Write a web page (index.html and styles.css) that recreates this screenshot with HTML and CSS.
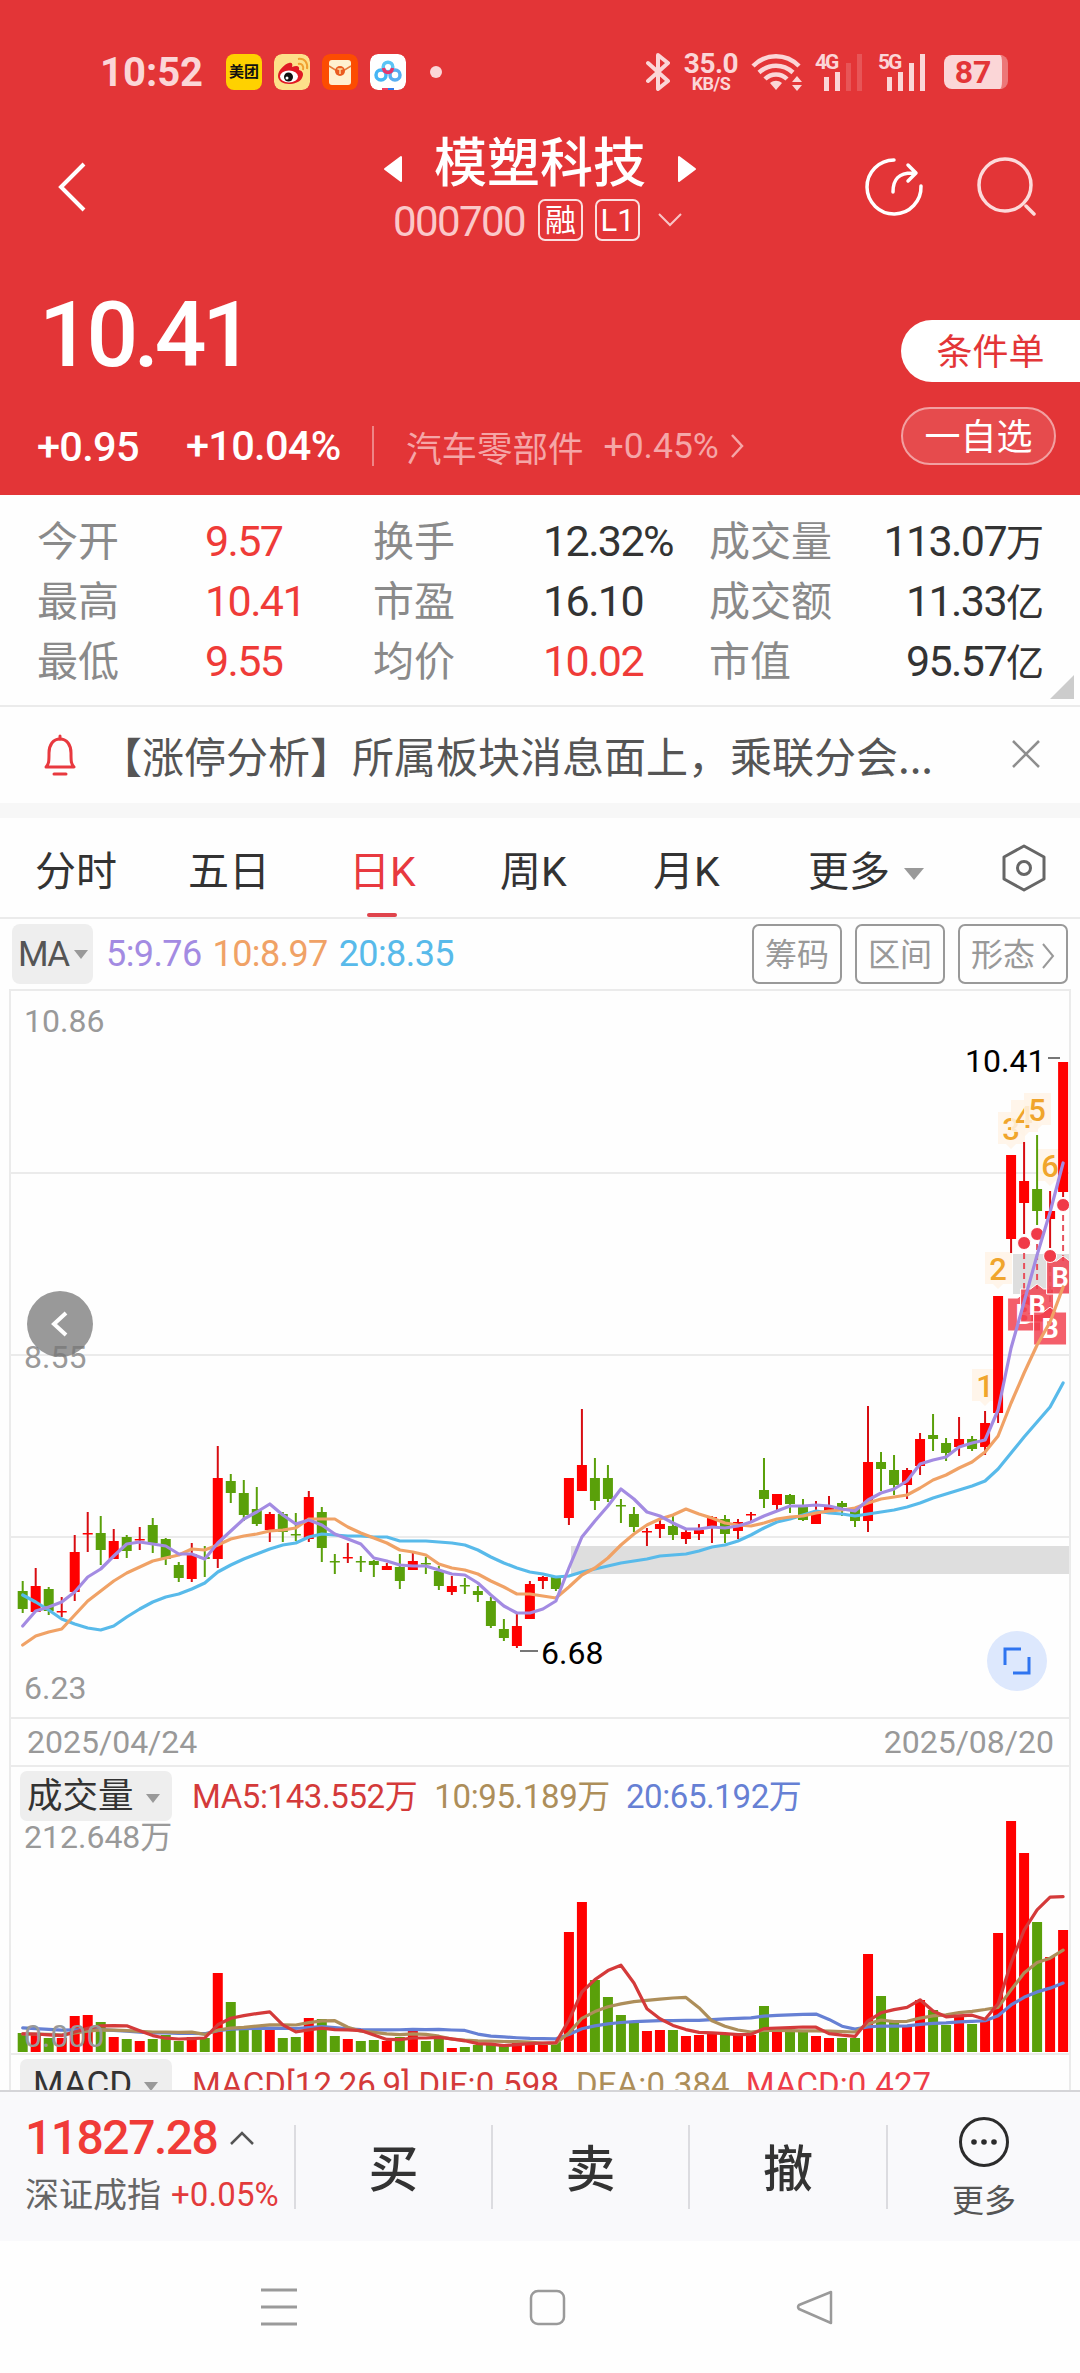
FILE: index.html
```html
<!DOCTYPE html>
<html lang="zh-CN">
<head>
    <meta charset="UTF-8">
    <meta name="viewport" content="width=device-width, initial-scale=1.0">
    <title>模塑科技 000700</title>
    <link rel="stylesheet" href="styles.css">
</head>
<body>
    <header class="header">
        <div class="status-bar">
            <span class="clock">10:52</span>
            <div class="app-icons">
                <span class="app-icon meituan">美团</span>
                <svg class="app-icon" viewBox="0 0 36 36">
                    <rect width="36" height="36" rx="8" fill="#fde08a"/>
                    <path d="M4 22c0-6 7-12 11-13 3-1 4 1 3 4 5-2 8-1 7 3 4 1 5 4 3 8-2 4-8 6-13 6C9 30 4 27 4 22z" fill="#e01a24"/>
                    <ellipse cx="15" cy="22.500" rx="9" ry="6" fill="#fff"/>
                    <circle cx="14.500" cy="23" r="4.500" fill="#111"/>
                    <circle cx="13" cy="24" r="1.500" fill="#fff"/>
                    <path d="M24 10c4-1 6 2 5 6M24 5c7-1 10 4 9 10" stroke="#f0a030" stroke-width="2" fill="none"/>
                </svg>
                <svg class="app-icon" viewBox="0 0 36 36">
                    <rect width="36" height="36" rx="8" fill="#fc4c02"/>
                    <rect x="7" y="6" width="22" height="25" rx="3" fill="#fff0cf"/>
                    <path d="M7 12l8 5h6l8-5" stroke="#e57a3c" stroke-width="1.500" fill="none"/>
                    <circle cx="18" cy="17" r="5" fill="#ea5c20"/>
                    <path d="M15.500 15h5M18 15v5" stroke="#ffd9a0" stroke-width="1.500"/>
                </svg>
                <svg class="app-icon" viewBox="0 0 36 36">
                    <rect width="36" height="36" rx="8" fill="#fff"/>
                    <g fill="none" stroke-width="3.500">
                        <circle cx="11" cy="21" r="5" stroke="#45b5f5"/>
                        <circle cx="25" cy="21" r="5" stroke="#58aef2"/>
                        <circle cx="18" cy="13" r="4.800" stroke="#5cc4f5"/>
                        <path d="M13.500 14c1 6 8 6 9 0" stroke="#e5386d"/>
                    </g>
                    <path d="M12 34h6v2h-6z" fill="#f04060"/>
                    <path d="M18 34h6v2h-6z" fill="#3078e8"/>
                </svg>
            </div>
            <span class="dot"></span>
            <svg class="bluetooth" viewBox="0 0 24 38"><path d="M2 10l20 18-10 8V2l10 8L2 28" fill="none" stroke="currentColor" stroke-width="4" stroke-linejoin="round" stroke-linecap="round"/></svg>
            <div class="net-speed"><b>35.0</b><span>KB/S</span></div>
            <svg class="wifi" viewBox="0 0 52 38">
                <g fill="none" stroke="currentColor" stroke-width="4.500">
                    <path d="M2 13c13-13 33-13 46 0"/>
                    <path d="M8 19.500c10-9 24-9 34 0"/>
                    <path d="M14 26c6-6 16-6 22 0"/>
                </g>
                <path d="M19 30c4-3 8-3 12 0l-6 7z" fill="currentColor"/>
                <path d="M41 29l5-6 5 6zM41 32h10l-5 6z" fill="currentColor"/>
            </svg>
            <div class="signal">
                <b>4G</b>
                <svg viewBox="0 0 38 38">
                    <path d="M9 24h5v14H9zM20 19h5v19h-5z" fill="currentColor"/>
                    <path d="M31 10h5v28h-5zM42 1h5v37h-5z" fill="currentColor" opacity=".2"/>
                </svg>
            </div>
            <div class="signal">
                <b>5G</b>
                <svg viewBox="0 0 38 38"><path d="M9 24h5v14H9zM20 19h5v19h-5zM31 10h5v28h-5zM42 1h5v37h-5z" fill="currentColor"/></svg>
            </div>
            <span class="battery">87</span>
        </div>

        <div class="title-bar">
            <svg class="back" viewBox="0 0 30 50"><path d="M27 2L4 25l23 23" fill="none" stroke="#fff" stroke-width="4"/></svg>
            <div class="stock">
                <div class="stock-name">
                    <svg viewBox="0 0 20 28"><path d="M18 2v24L2 14z" fill="#fff" stroke="#fff" stroke-width="2" stroke-linejoin="round"/></svg>
                    <h1>模塑科技</h1>
                    <svg viewBox="0 0 20 28"><path d="M2 2v24l16-12z" fill="#fff" stroke="#fff" stroke-width="2" stroke-linejoin="round"/></svg>
                </div>
                <div class="stock-code">
                    <span class="code">000700</span>
                    <span class="tag">融</span>
                    <span class="tag">L1</span>
                    <svg viewBox="0 0 26 14"><path d="M2 1l11 11L24 1" fill="none" stroke="#f8c5c6" stroke-width="2"/></svg>
                </div>
            </div>
            <div class="actions">
                <svg viewBox="0 0 60 60">
                    <g fill="none" stroke="#fff" stroke-width="3.500" stroke-linecap="round" stroke-linejoin="round">
                        <path d="M30 3a27 27 0 1 0 27 26"/>
                        <path d="M29 35c0-12 5-20 22-19M44 8l8 8-8 8"/>
                    </g>
                </svg>
                <svg viewBox="0 0 60 60">
                    <g fill="none" stroke="#fcdada" stroke-width="3.500" stroke-linecap="round">
                        <circle cx="29" cy="28" r="26"/>
                        <path d="M50 49l8 8"/>
                    </g>
                </svg>
            </div>
        </div>

        <div class="quote">
            <div class="quote-main">
                <div class="price">10.41</div>
                <div class="change">
                    <span class="amount">+0.95</span>
                    <span class="percent">+10.04%</span>
                    <span class="industry">汽车零部件</span>
                    <span class="industry-change">+0.45%</span>
                    <svg viewBox="0 0 14 24"><path d="M2 1l10 11L2 23" fill="none" stroke="#f5a6a7" stroke-width="2.500"/></svg>
                </div>
            </div>
            <div class="quote-buttons">
                <a class="btn-order">条件单</a>
                <a class="btn-watch">一自选</a>
            </div>
        </div>
    </header>

    <section class="stats">
        <span class="label">今开</span><span class="up">9.57</span>
        <span class="label">换手</span><span>12.32%</span>
        <span class="label">成交量</span><span class="right">113.07<i>万</i></span>
        <span class="label">最高</span><span class="up">10.41</span>
        <span class="label">市盈</span><span>16.10</span>
        <span class="label">成交额</span><span class="right">11.33<i>亿</i></span>
        <span class="label">最低</span><span class="up">9.55</span>
        <span class="label">均价</span><span class="up">10.02</span>
        <span class="label">市值</span><span class="right">95.57<i>亿</i></span>
        <b class="corner"></b>
    </section>

    <section class="notice">
        <svg class="bell" viewBox="0 0 34 42">
            <g fill="none" stroke="#e8393f" stroke-width="3" stroke-linecap="round" stroke-linejoin="round">
                <path d="M3 33c3-3 3-6 3-14C6 11 10 5 17 5s11 6 11 14c0 8 0 11 3 14z"/>
                <path d="M17 2v3M11 40h12"/>
            </g>
        </svg>
        <p>【涨停分析】所属板块消息面上，乘联分会...</p>
        <svg class="close" viewBox="0 0 28 28"><path d="M1 1l26 26M27 1L1 27" stroke="#8e8e8e" stroke-width="2.500"/></svg>
    </section>

    <nav class="tabs">
        <a>分时</a>
        <a>五日</a>
        <a class="active">日K</a>
        <a>周K</a>
        <a>月K</a>
        <a class="more">更多<b class="caret"></b></a>
        <svg viewBox="0 0 44 48">
            <g fill="none" stroke="#666" stroke-width="3" stroke-linejoin="round">
                <path d="M22 2l20 11v22L22 46 2 35V13z"/>
                <circle cx="22" cy="24" r="6.500"/>
            </g>
        </svg>
    </nav>

    <section class="toolbar">
        <a class="ma-select">MA<b class="caret"></b></a>
        <span class="ma5">5:9.76</span>
        <span class="ma10">10:8.97</span>
        <span class="ma20">20:8.35</span>
        <a class="tool first">筹码</a>
        <a class="tool">区间</a>
        <a class="tool">形态<svg viewBox="0 0 14 26"><path d="M2 1l10 12L2 25" fill="none" stroke="#999" stroke-width="2"/></svg></a>
    </section>

    <main class="chart">
        <svg id="kline" viewBox="11 1 1058 726"></svg>
        <div class="dates"><span>2025/04/24</span><span>2025/08/20</span></div>
        <div class="indicator">
            <a class="select">成交量<b class="caret"></b></a>
            <span class="v5">MA5:143.552万</span>
            <span class="v10">10:95.189万</span>
            <span class="v20">20:65.192万</span>
        </div>
        <svg id="volume" viewBox="11 0 1058 230"></svg>
        <div class="indicator macd">
            <a class="select">MACD<b class="caret"></b></a>
            <span class="v5">MACD[12,26,9] DIF:0.598</span>
            <span class="v10">DEA:0.384</span>
            <span class="hist">MACD:0.427</span>
        </div>
    </main>

    <footer class="trade-bar">
        <div class="index">
            <div class="index-value">11827.28<svg viewBox="0 0 26 14"><path d="M2 13L13 2l11 11" fill="none" stroke="#555" stroke-width="2.500"/></svg></div>
            <div class="index-name">深证成指<span>+0.05%</span></div>
        </div>
        <a>买</a>
        <a>卖</a>
        <a>撤</a>
        <div class="trade-more">
            <svg viewBox="0 0 52 52">
                <circle cx="26" cy="26" r="23.500" fill="none" stroke="#2c2c2c" stroke-width="3"/>
                <g fill="#2c2c2c"><circle cx="16" cy="26" r="2.800"/><circle cx="26" cy="26" r="2.800"/><circle cx="36" cy="26" r="2.800"/></g>
            </svg>
            <span>更多</span>
        </div>
    </footer>

    <div class="system-nav">
        <svg viewBox="0 0 40 40"><path d="M2 3h36M2 20h36M2 37h36" stroke="#9a9a9a" stroke-width="3"/></svg>
        <svg viewBox="0 0 40 40"><rect x="4" y="4" width="33" height="33" rx="7" fill="none" stroke="#9a9a9a" stroke-width="2.500"/></svg>
        <svg viewBox="0 0 40 40"><path d="M36 5v31L4 22q-2-2 0-4z" fill="none" stroke="#9a9a9a" stroke-width="2.500" stroke-linejoin="round"/></svg>
    </div>

    <script src="script.js"></script>
</body>
</html>
```

FILE: styles.css
```css
* {
    box-sizing: border-box;
}

body {
    margin: 0;
    width: 1080px;
    height: 2373px;
    overflow: hidden;
    background-color: #fefefe;
    color: #333;
    font-family: Roboto, "Noto Sans CJK SC", sans-serif;
}

svg {
    display: block;
    flex: none;
}

h1, p {
    margin: 0;
}

/* Header */
.header {
    height: 495px;
    background-color: #e33537;
    color: #fff;
}

.status-bar {
    display: flex;
    align-items: center;
    height: 110px;
    padding: 34px 72px 0 100px;
    color: #fbd6d7;
}

.clock {
    width: 126px;
    font-size: 40px;
    font-weight: bold;
    white-space: nowrap;
}

.app-icons {
    display: flex;
    gap: 12px;
}

.app-icon {
    width: 36px;
    height: 36px;
    border-radius: 8px;
}

.meituan {
    background-color: #ffd100;
    color: #111;
    font-size: 15px;
    font-weight: bold;
    line-height: 36px;
    text-align: center;
}

.dot {
    width: 12px;
    height: 12px;
    margin-left: 24px;
    border-radius: 50%;
    background-color: #fbd6d7;
}

.bluetooth {
    width: 24px;
    height: 38px;
    margin-left: auto;
}

.net-speed {
    display: flex;
    flex-direction: column;
    align-items: center;
    width: 60px;
    margin-left: 11px;
    letter-spacing: -0.5px;
}

.net-speed b {
    font-size: 28px;
    font-weight: bold;
    line-height: 22px;
}

.net-speed span {
    font-size: 18px;
    font-weight: bold;
    line-height: 17px;
}

.wifi {
    width: 52px;
    height: 38px;
    margin-left: 10px;
}

.signal {
    display: flex;
    width: 49px;
    height: 38px;
    margin-left: 12px;
}

.signal b {
    width: 0;
    font-size: 21px;
    font-weight: bold;
    line-height: 18px;
    letter-spacing: -2px;
}

.signal svg {
    width: 38px;
    height: 38px;
    overflow: visible;
}

.signal + .signal {
    margin-left: 14px;
}

.battery {
    width: 64px;
    height: 34px;
    margin-left: 17px;
    border-radius: 8px;
    border-right: 6px solid #ec7778;
    background-color: #fbd6d7;
    color: #e33537;
    font-size: 32px;
    font-weight: bold;
    line-height: 35px;
    text-align: center;
}

.title-bar {
    display: grid;
    grid-template-columns: 240px 600px 240px;
    align-items: center;
    height: 131px;
    padding-top: 23px;
}

.back {
    width: 30px;
    height: 50px;
    margin-left: 57px;
}

.stock-name {
    display: flex;
    justify-content: center;
    align-items: center;
    gap: 31px;
    height: 60px;
    margin-bottom: 6px;
}

.stock-name svg {
    width: 20px;
    height: 28px;
    margin-top: 12px;
}

.stock-name h1 {
    padding-top: 2px;
    font-size: 53px;
    font-weight: 500;
    line-height: 60px;
}

.stock-code {
    display: flex;
    justify-content: center;
    align-items: center;
    height: 42px;
    margin-right: 4px;
}

.code {
    margin-right: 13px;
    padding-top: 2px;
    color: #fbc8c9;
    font-size: 42px;
    letter-spacing: -1.6px;
}

.tag {
    width: 45px;
    height: 42px;
    margin-right: 12px;
    border: 2px solid #fbdede;
    border-radius: 7px;
    font-size: 31px;
    line-height: 39px;
    text-align: center;
}

.stock-code svg {
    width: 26px;
    height: 14px;
    margin-left: 5px;
}

.actions {
    display: flex;
    gap: 52px;
    padding-left: 24px;
}

.actions svg {
    width: 60px;
    height: 60px;
}

.quote {
    display: flex;
    justify-content: space-between;
}

.quote-main {
    padding: 44px 0 0 37px;
}

.price {
    height: 100px;
    padding-left: 2px;
    font-size: 91px;
    font-weight: 500;
    line-height: 101px;
    letter-spacing: -4.3px;
}

.change {
    display: flex;
    align-items: center;
    height: 60px;
    margin-top: 31px;
    font-size: 41.5px;
    font-weight: 500;
    letter-spacing: -0.7px;
    white-space: nowrap;
}

.amount {
    width: 149px;
}

.percent {
    width: 188px;
    height: 40px;
    line-height: 40px;
    border-right: 2px solid #ee8586;
}

.industry, .industry-change {
    color: #f5a6a7;
    font-size: 35.5px;
    font-weight: 400;
}

.industry {
    margin: 0 20px 0 32px;
    letter-spacing: 0;
}

.industry-change {
    letter-spacing: 0;
}

.change svg {
    width: 14px;
    height: 24px;
    margin-left: 11px;
}

.quote-buttons {
    width: 179px;
    padding-top: 79px;
    font-size: 36px;
    text-align: center;
}

.btn-order {
    display: block;
    height: 62px;
    border-radius: 31px 0 0 31px;
    background-color: #fff;
    color: #e33537;
    line-height: 66px;
}

.btn-watch {
    display: block;
    width: 155px;
    height: 58px;
    margin-top: 25px;
    border: 2px solid #f2a0a1;
    border-radius: 29px;
    background-color: #e64b4d;
    line-height: 59px;
}

/* Day statistics */
.stats {
    position: relative;
    display: grid;
    grid-template-columns: 168px 168px 170px 166px 132px 203px;
    grid-auto-rows: 60px;
    height: 212px;
    padding: 16px 0 0 37px;
    border-bottom: 2px solid #ebebeb;
    font-size: 43px;
    line-height: 61px;
    letter-spacing: -1.6px;
    white-space: nowrap;
}

.stats .label {
    color: #8a8a8a;
    font-size: 41px;
    line-height: 62px;
    letter-spacing: 0;
}

.stats i {
    font-size: 38px;
    font-style: normal;
    letter-spacing: 0;
}

.stats .right {
    text-align: right;
}

.up {
    color: #ef3b38;
}

.corner {
    position: absolute;
    right: 6px;
    bottom: 6px;
    border-left: 24px solid transparent;
    border-bottom: 24px solid #ccc;
}

/* Notice */
.notice {
    display: flex;
    align-items: center;
    height: 111px;
    padding: 0 40px 0 43px;
    border-bottom: 15px solid #f7f7f7;
}

.bell {
    width: 34px;
    height: 42px;
}

.notice p {
    flex: 1;
    margin-left: 23px;
    color: #555;
    font-family: "Noto Sans CJK SC", sans-serif;
    font-size: 42px;
    line-height: 60px;
    white-space: nowrap;
}

.close {
    width: 28px;
    height: 28px;
    margin-bottom: 2px;
}

/* Period tabs */
.tabs {
    display: grid;
    grid-template-columns: 153px 161px 151px 153px 155px 194px 44px;
    align-items: center;
    height: 101px;
    padding: 0 0 0 35px;
    border-bottom: 2px solid #ebebeb;
    font-size: 41px;
    line-height: 99px;
    white-space: nowrap;
}

.tabs a {
    height: 99px;
    padding-top: 5px;
}

.tabs .active {
    color: #e8393f;
}

.tabs .active::after {
    content: "";
    display: block;
    width: 30px;
    height: 4px;
    margin: -9px 0 0 18px;
    border-radius: 2px;
    background-color: #e0444c;
}

.tabs svg {
    width: 44px;
    height: 48px;
}

.caret {
    display: inline-block;
    border: 7px solid transparent;
    border-top: 9px solid #999;
    border-bottom: 0;
}

.tabs .caret {
    margin: 0 0 6px 14px;
    border-width: 12px 10px 0;
}

/* MA toolbar */
.toolbar {
    display: flex;
    align-items: center;
    height: 70px;
    padding: 0 12px;
    font-size: 36px;
    letter-spacing: -0.6px;
}

.ma-select {
    width: 81px;
    height: 60px;
    padding-left: 6px;
    border-radius: 8px;
    background-color: #eee;
    color: #555;
    font-size: 35px;
    line-height: 62px;
    letter-spacing: -1.5px;
    white-space: nowrap;
}

.ma-select .caret {
    margin: 0 0 7px 5px;
}

.ma5 {
    margin-left: 13px;
    color: #a38be2;
}

.ma10 {
    margin-left: 11px;
    color: #f0a266;
}

.ma20 {
    margin-left: 11px;
    color: #58baea;
}

.tool {
    height: 60px;
    margin-left: 13px;
    padding: 0 11px;
    border: 2px solid #999;
    border-radius: 7px;
    color: #999;
    font-size: 32px;
    line-height: 59px;
    letter-spacing: 0;
}

.tool.first {
    margin-left: auto;
}

.tool svg {
    display: inline-block;
    width: 14px;
    height: 26px;
    margin: 0 0 -3px 6px;
}

/* Charts */
.chart {
    height: 1101px;
    margin: 0 9px;
    border: 2px solid #ebebeb;
    border-bottom: 0;
    overflow: hidden;
}

#kline {
    width: 1058px;
    height: 726px;
}

#volume {
    width: 1058px;
    height: 230px;
    overflow: visible;
}

.axis {
    fill: #999;
    font-size: 32px;
}

.extreme {
    fill: #000;
    font-size: 32px;
}

.count {
    fill: #f0a52c;
    font-size: 31px;
    font-weight: 500;
    text-anchor: middle;
}

.trade-mark {
    fill: #fff;
    font-size: 27px;
    font-weight: bold;
    text-anchor: middle;
}

.dates {
    display: flex;
    justify-content: space-between;
    height: 48px;
    padding: 0 15px 0 16px;
    border-top: 2px solid #ebebeb;
    color: #999;
    font-size: 32px;
    line-height: 47px;
}

.indicator {
    display: flex;
    height: 58px;
    padding-left: 9px;
    border-top: 2px solid #ebebeb;
    font-size: 33px;
    line-height: 59px;
    letter-spacing: -0.4px;
    white-space: nowrap;
}

.select {
    width: 152px;
    height: 50px;
    margin: 4px 20px 0 0;
    padding-left: 7px;
    border-radius: 7px;
    background-color: #eee;
    color: #333;
    font-size: 35.5px;
    line-height: 51px;
    letter-spacing: 0;
}

.select .caret {
    margin: 0 0 5px 12px;
}

.v5 {
    color: #d43a3a;
}

.v10 {
    margin-left: 17px;
    color: #ad8e5a;
}

.v20 {
    margin-left: 16px;
    color: #6680d4;
}

.hist {
    margin-left: 16px;
    color: #ee3d48;
}

.macd {
    height: 37px;
    letter-spacing: 0.1px;
}

.macd .select {
    padding-left: 13px;
    font-size: 35px;
    line-height: 51px;
}

/* Trade bar */
.trade-bar {
    display: grid;
    grid-template-columns: 294px 197px 197px 198px 194px;
    align-items: center;
    height: 151px;
    border-top: 2px solid #d5d5d8;
    background-color: #f9f9fb;
}

.index {
    height: 84px;
    padding-left: 25px;
    white-space: nowrap;
}

.index-value {
    display: flex;
    align-items: center;
    margin-top: -17px;
    color: #f03b37;
    font-size: 48px;
    font-weight: 500;
    line-height: 60px;
    letter-spacing: -1.5px;
}

.index-value svg {
    width: 26px;
    height: 14px;
    margin-left: 12px;
}

.index-name {
    display: flex;
    align-items: center;
    color: #666;
    font-size: 34px;
    line-height: 54px;
}

.index-name span {
    margin-left: 10px;
    color: #e33b3b;
    font-size: 33px;
    letter-spacing: 0.1px;
}

.trade-bar a {
    height: 84px;
    border-left: 2px solid #dcdce0;
    font-size: 50px;
    font-weight: 500;
    line-height: 90px;
    text-align: center;
}

.trade-more {
    display: flex;
    flex-direction: column;
    align-items: center;
    height: 84px;
    border-left: 2px solid #dcdce0;
    color: #555;
    font-size: 32px;
    line-height: 66px;
}

.trade-more svg {
    width: 52px;
    height: 52px;
    margin-top: -9px;
}

.system-nav {
    display: flex;
    gap: 228px;
    padding: 46px 0 0 259px;
}

.system-nav svg {
    width: 40px;
    height: 40px;
}
```

FILE: script.js
```js
const NS = 'http://www.w3.org/2000/svg';
const RED = '#ff0000';
const GREEN = '#5aa00a';

// Each candle: direction, high, body top, body bottom, low (plot units, y down)
const candles = [
    ['G',591,601,619,623],['R',578,596,622,622],['G',597,599,621,625],['R',607,621,621,627],['R',545,562,602,611],
    ['R',522,543,543,562],['G',526,543,560,575],['R',539,551,569,569],['G',545,547,561,568],['R',537,549,549,560],
    ['G',528,535,553,563],['G',548,549,569,575],['G',572,575,588,592],['R',553,564,589,592],['G',556,567,569,587],
    ['R',456,488,569,578],['G',484,491,503,513],['G',490,503,525,531],['G',497,519,534,536],['R',522,524,540,552],
    ['G',522,524,542,552],['G',523,544,544,551],['R',501,507,549,552],['G',517,522,558,572],['G',564,571,571,584],
    ['R',553,567,567,573],['G',566,571,571,582],['G',570,571,575,587],['R',573,576,580,580],['G',564,577,591,599],
    ['R',561,571,580,580],['G',567,573,573,584],['G',576,581,596,600],['R',586,596,602,605],['G',588,595,595,604],
    ['G',596,601,605,612],['G',607,611,636,638],['G',629,639,648,651],['R',624,636,656,658],['R',591,594,629,629],
    ['R',586,587,591,599],['G',587,587,599,601],['R',488,488,528,535],['R',419,475,501,501],['G',468,488,511,520],
    ['G',475,488,509,512],['G',509,515,515,533],['G',517,524,537,542],['R',538,541,541,556],['R',530,534,539,548],
    ['G',526,536,545,550],['R',539,542,549,554],['R',534,540,544,550],['R',526,527,538,553],['G',525,529,544,553],
    ['R',529,532,541,549],['R',522,524,524,531],['G',468,500,509,518],['R',504,504,515,521],['G',504,505,514,523],
    ['G',509,516,530,531],['R',511,522,534,534],['R',506,517,523,523],['G',511,513,517,526],['G',517,519,531,537],
    ['R',416,472,531,542],['G',462,472,479,501],['G',465,480,495,505],['R',478,480,495,509],['R',443,449,476,485],
    ['G',424,445,449,461],['G',448,453,463,471],['R',427,449,457,466],['G',446,449,459,461],['R',421,433,457,465],
    ['R',306,306,423,433],['R',165,165,249,263],['R',152,191,213,244],['G',145,199,221,235],['R',201,221,229,258],
    ['R',72,72,202,207]
];

const ma5 = [636,621,617,612,602,587,579,566,554,552,554,556,564,564,569,553,541,529,522,514,525,534,530,535,544,549,554,
    568,571,575,576,576,580,584,585,593,605,616,623,623,619,611,578,547,531,516,499,509,522,526,533,539,539,537,538,536,
    532,526,521,516,516,515,516,519,521,510,503,499,491,474,470,467,457,453,450,420,358,312,265,222,173];
const ma10 = [655,646,642,639,625,611,601,591,583,577,571,568,565,559,560,555,549,546,544,541,540,538,529,529,529,537,543,
    548,553,560,562,565,574,578,580,584,591,597,604,604,606,608,597,585,578,568,555,544,535,529,525,519,524,528,533,535,
    536,533,529,527,526,523,521,520,518,513,509,507,505,498,490,485,478,472,462,446,413,383,355,332,297];
const ma20 = [605,612,620,629,634,638,640,636,627,619,612,607,604,599,593,582,575,569,564,559,555,553,547,544,545,546,546,
    547,547,551,551,551,552,553,555,560,567,573,578,582,584,587,586,582,579,576,573,571,569,566,565,564,561,557,555,551,
    545,538,532,529,525,521,523,524,526,524,522,520,517,513,508,504,500,496,491,479,463,447,432,417,393];

const volumes = [19,17,14,14,36,37,30,15,13,11,13,17,11,15,14,79,50,24,25,23,14,15,34,33,16,13,11,12,11,15,21,11,15,4,5,
    7,8,8,9,10,10,10,120,150,72,55,37,31,21,22,22,16,17,19,18,17,17,46,22,20,20,16,14,14,14,98,56,30,25,52,42,27,35,28,
    32,119,231,199,130,95,122];
// Sessions before the visible window, only needed for the averages
const earlier = Array(10).fill(30).concat(Array(9).fill(18));

const x = i => 22.7 + i * 13.005;

function add(parent, tag, attrs, text) {
    const el = document.createElementNS(NS, tag);
    for (const key in attrs) el.setAttribute(key, attrs[key]);
    if (text) el.textContent = text;
    parent.appendChild(el);
    return el;
}

function line(parent, ys, color) {
    add(parent, 'polyline', {
        points: ys.map((y, i) => x(i) + ',' + y).join(' '),
        fill: 'none', stroke: color, 'stroke-width': 3.2, 'stroke-linejoin': 'round', 'stroke-linecap': 'round'
    });
}

function drawKline() {
    const svg = document.getElementById('kline');

    [183, 365, 547].forEach(y => add(svg, 'path', { d: `M11 ${y}H1069`, stroke: '#ebebeb', 'stroke-width': 2 }));

    // Price gaps
    add(svg, 'rect', { x: 571, y: 556, width: 500, height: 28, fill: '#dedede' });
    add(svg, 'rect', { x: 1013, y: 264, width: 58, height: 40, fill: '#dedede' });

    add(svg, 'text', { x: 24, y: 42, class: 'axis' }, '10.86');
    add(svg, 'text', { x: 24, y: 378, class: 'axis' }, '8.55');
    add(svg, 'text', { x: 24, y: 709, class: 'axis' }, '6.23');

    // Sequence counts over the last rising days
    [[985, 379], [998, 262], [1011, 122], [1024, 110], [1037, 103], [1050, 159]].forEach(([cx, y], i) => {
        add(svg, 'path', {
            d: `M${cx - 13} ${y}h27v32h-9l-5 5l-5 -5h-8z`, fill: '#fff3e6', 'fill-opacity': 0.85
        });
        add(svg, 'text', { x: cx, y: y + 28, class: 'count' }, String(i + 1));
    });

    candles.forEach(([dir, high, top, bottom, low], i) => {
        const color = dir === 'R' ? RED : GREEN;
        const cx = x(i);
        add(svg, 'path', { d: `M${cx} ${high}V${low}`, stroke: dir === 'R' ? '#d80d12' : color, 'stroke-width': 2 });
        const h = Math.max(bottom - top, 1.5);
        add(svg, 'rect', { x: cx - 5, y: top, width: 10, height: h, fill: color });
    });

    // Buy marks: dot, dashed stem and flag
    [[77, 253, 308], [78, 244, 299], [80, 215, 271], [79, 266, 322]].forEach(([i, dot, y]) => {
        const cx = x(i);
        add(svg, 'path', { d: `M${cx} ${dot + 10}V${y}`, stroke: '#e8505c', 'stroke-width': 2, 'stroke-dasharray': '6 4' });
        add(svg, 'circle', { cx: cx, cy: dot, r: 6.5, fill: '#f03a48', stroke: '#fff', 'stroke-width': 1 });
        add(svg, 'path', {
            d: `M${cx - 16.5} ${y}h10l6.500 -5l6.500 5h10v33h-33z`,
            fill: '#f23c4a', 'fill-opacity': 0.82, stroke: '#fff', 'stroke-width': 1
        });
        add(svg, 'text', { x: i === 80 ? cx - 3 : cx, y: y + 26, class: 'trade-mark' }, 'B');
    });

    line(svg, ma20, '#58baea');
    line(svg, ma10, '#f0a266');
    line(svg, ma5, '#a38be2');

    add(svg, 'path', { d: 'M520 661h18M1048 68h12', stroke: '#777', 'stroke-width': 2 });
    add(svg, 'text', { x: 541, y: 674, class: 'extreme' }, '6.68');
    add(svg, 'text', { x: 965, y: 82, class: 'extreme' }, '10.41');

    // Scroll back and full screen buttons
    add(svg, 'circle', { cx: 60, cy: 334, r: 33, fill: '#777', 'fill-opacity': 0.75 });
    add(svg, 'path', { d: 'M66 323L54 334L66 345', fill: 'none', stroke: '#fff', 'stroke-width': 4 });
    add(svg, 'circle', { cx: 1017, cy: 671, r: 30, fill: '#dde8fd' });
    add(svg, 'path', { d: 'M1021 659h-16v16M1013 683h16v-16', fill: 'none', stroke: '#2f74f0', 'stroke-width': 3 });
}

function drawVolume() {
    const svg = document.getElementById('volume');
    const base = 229;
    const all = earlier.concat(volumes);
    const average = n => volumes.map((v, i) => {
        const end = i + earlier.length + 1;
        return base - all.slice(end - n, end).reduce((a, b) => a + b, 0) / n;
    });

    volumes.forEach((v, i) => {
        add(svg, 'rect', { x: x(i) - 5, y: base - v, width: 10, height: v, fill: candles[i][0] === 'R' ? RED : GREEN });
    });
    line(svg, average(20), '#6680d4');
    line(svg, average(10), '#ad8e5a');
    line(svg, average(5), '#d43a3a');
    add(svg, 'text', { x: 24, y: 25, class: 'axis' }, '212.648万');
    add(svg, 'text', { x: 24, y: 224, class: 'axis' }, '0.000');
}

drawKline();
drawVolume();
```
